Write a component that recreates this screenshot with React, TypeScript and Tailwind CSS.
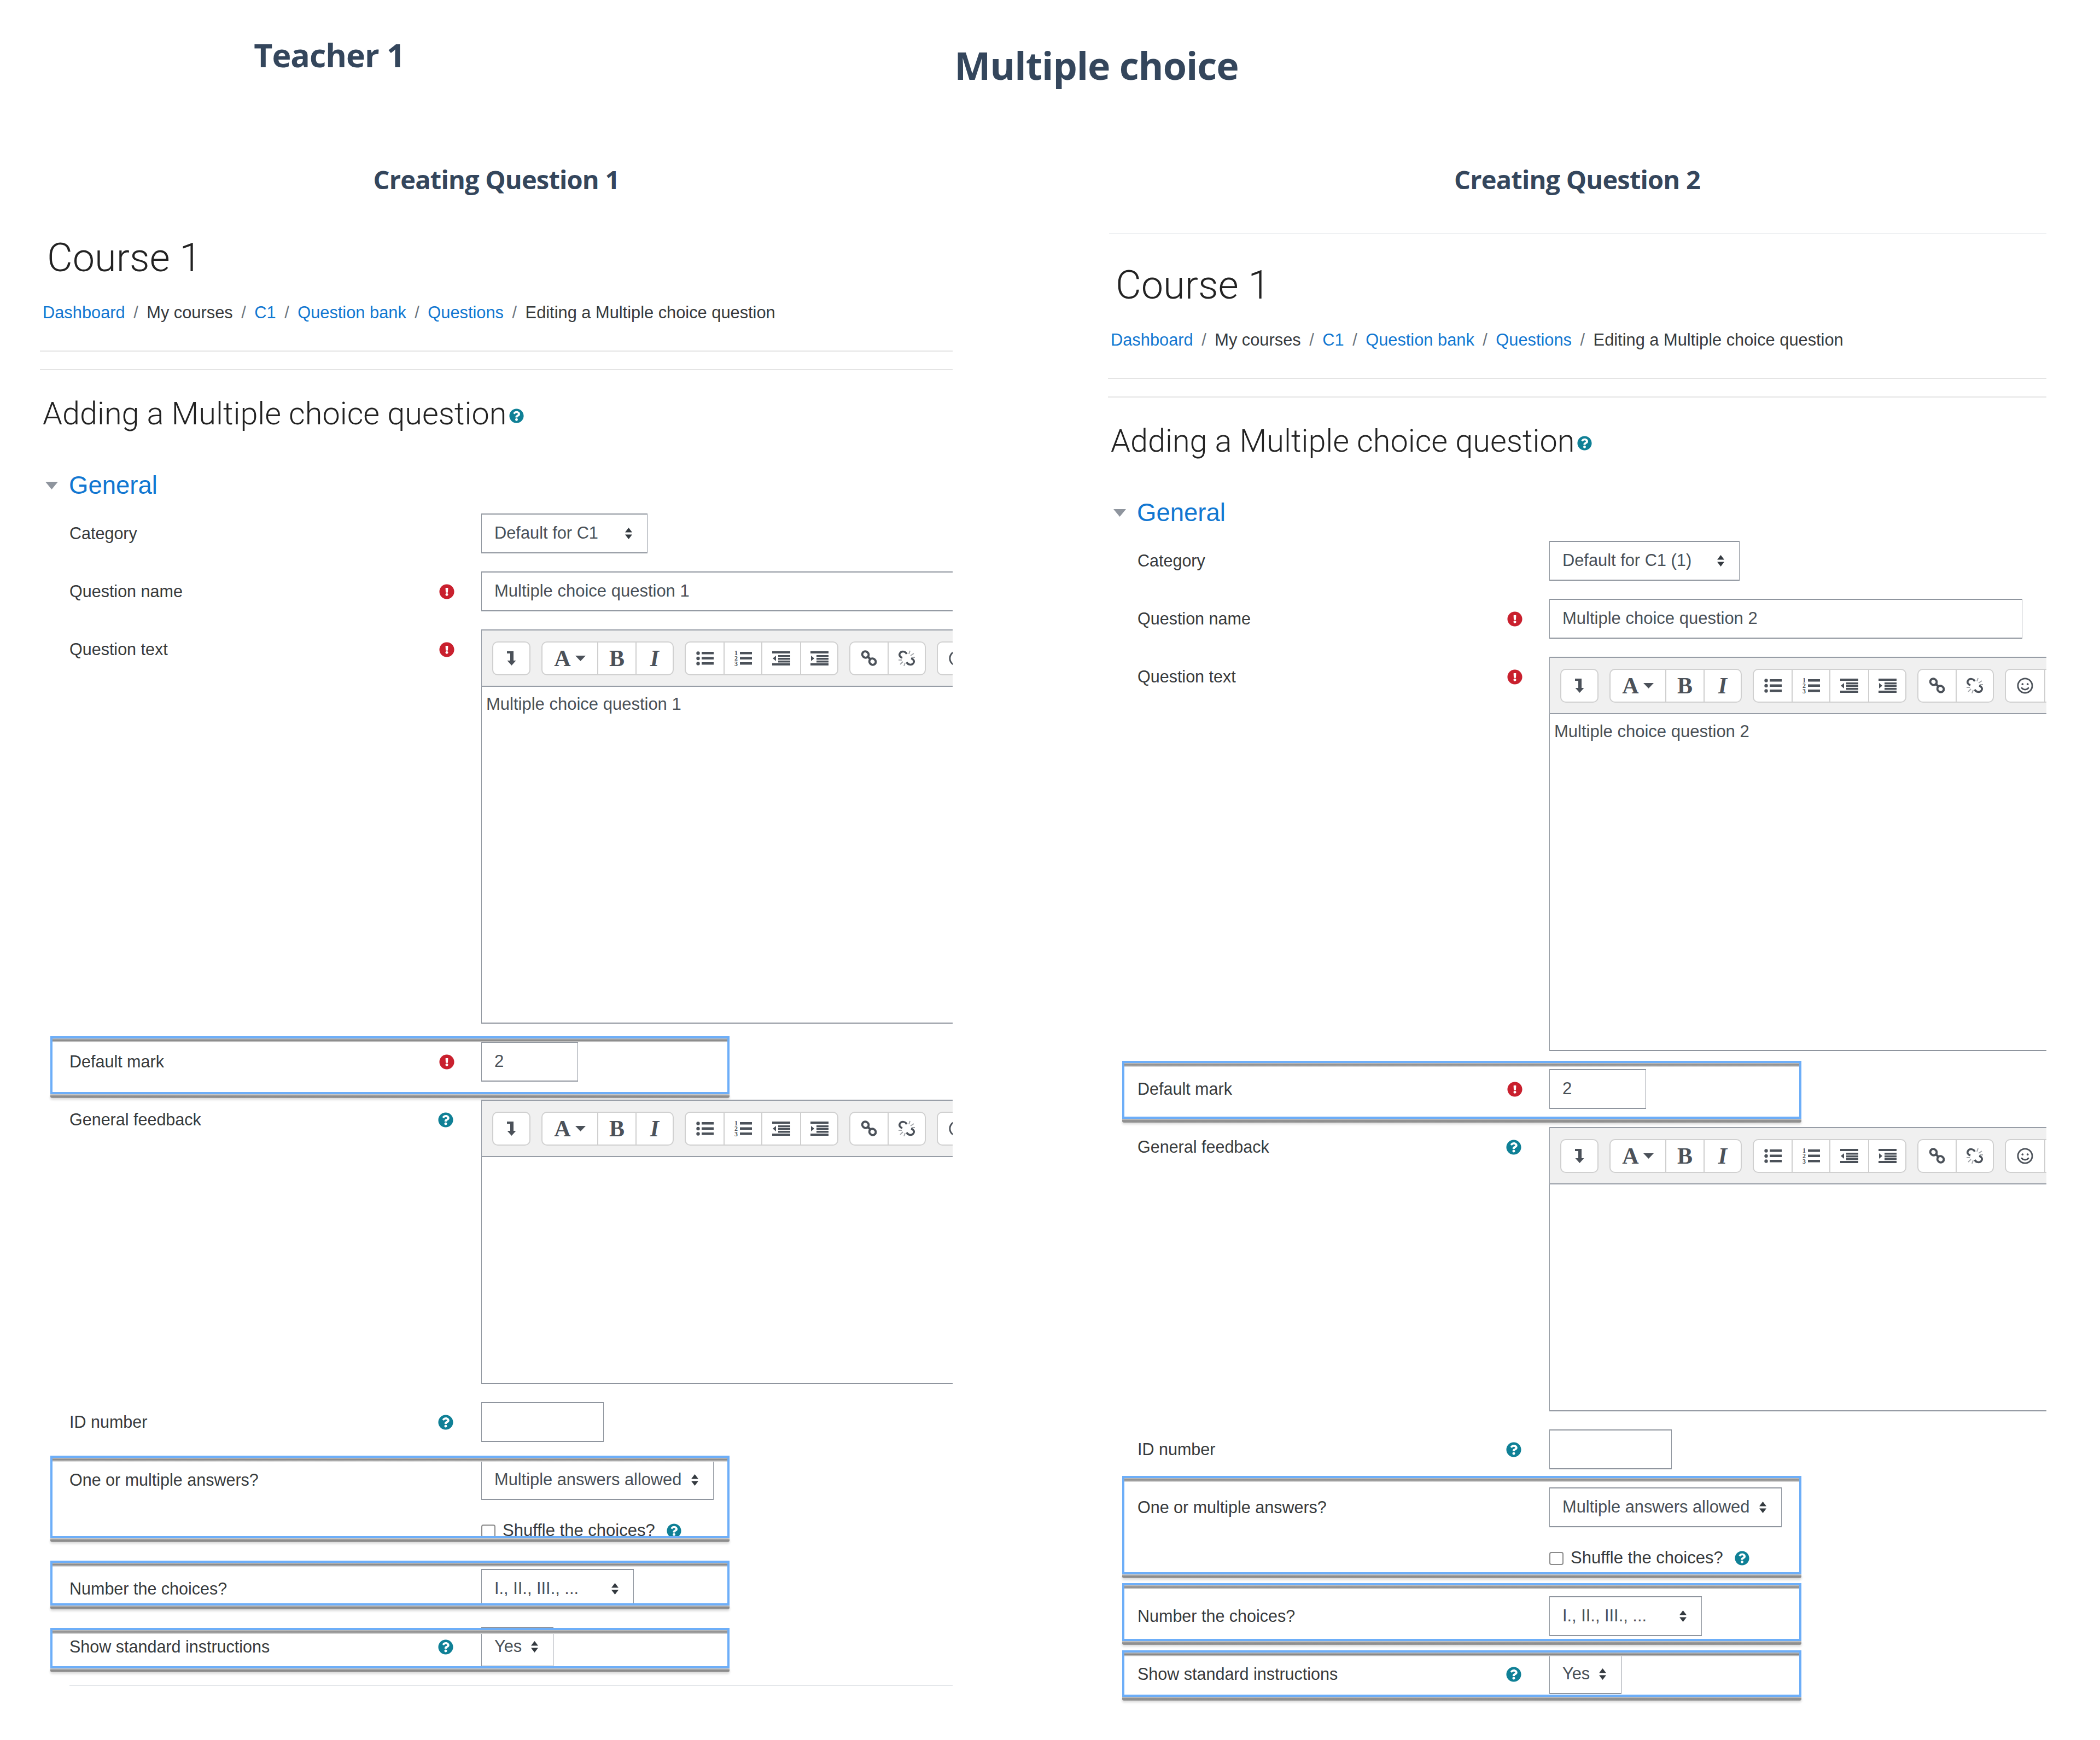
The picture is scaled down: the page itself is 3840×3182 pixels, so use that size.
import React from "react";
import { FaExclamationCircle, FaQuestionCircle, FaRegSmile } from "react-icons/fa";

const ICON = "#4b5159";

function Cell({ w, children, first }: { w: string; children?: React.ReactNode; first?: boolean }) {
  return (
    <div className={`${w} ${first ? "" : "border-l-2 border-[#cfcfcf]"} h-full flex items-center justify-center shrink-0`}>
      {children}
    </div>
  );
}

function Group({ children }: { children: React.ReactNode }) {
  return (
    <div className="flex h-[62px] shrink-0 rounded-[10px] border-2 border-[#d0d0d0] bg-white overflow-hidden">
      {children}
    </div>
  );
}

function Toolbar() {
  return (
    <div className="flex gap-[20px] w-[1100px] h-[105px] items-center pl-[19px] bg-[#f0f0f0] border-y-2 border-l border-[#979da6]">
      <Group>
        <Cell w="w-[66px]" first>
          <svg width="17" height="26" viewBox="0 0 17 26" fill={ICON}>
            <path d="M0 0h12v17h4.5L8.5 26 .5 17H6V4H0z" />
          </svg>
        </Cell>
      </Group>
      <Group>
        <Cell w="w-[100px]" first>
          <span className="font-['Liberation_Serif'] font-bold text-[42px] leading-none text-[#4b5159]">A</span>
          <svg className="ml-[8px]" width="19" height="10" viewBox="0 0 19 10" fill={ICON}>
            <path d="M0 0h19L9.5 10z" />
          </svg>
        </Cell>
        <Cell w="w-[70px]">
          <span className="font-['Liberation_Serif'] font-bold text-[42px] leading-none text-[#4b5159]">B</span>
        </Cell>
        <Cell w="w-[68px]">
          <span className="font-['Liberation_Serif'] font-bold italic text-[42px] leading-none text-[#4b5159]">I</span>
        </Cell>
      </Group>
      <Group>
        <Cell w="w-[69px]" first>
          <svg width="32" height="26" viewBox="0 0 32 26" fill={ICON}>
            <circle cx="3.5" cy="3.5" r="3.2" />
            <circle cx="3.5" cy="13" r="3.2" />
            <circle cx="3.5" cy="22.5" r="3.2" />
            <rect x="10" y="1" width="22" height="4.5" />
            <rect x="10" y="10.5" width="22" height="4.5" />
            <rect x="10" y="20" width="22" height="4.5" />
          </svg>
        </Cell>
        <Cell w="w-[69px]">
          <svg width="32" height="32" viewBox="0 0 32 32" fill={ICON}>
            <text x="0" y="10" fontSize="12" fontFamily="Liberation Serif" fontWeight="700">1</text>
            <text x="0" y="20" fontSize="12" fontFamily="Liberation Serif" fontWeight="700">2</text>
            <text x="0" y="30" fontSize="12" fontFamily="Liberation Serif" fontWeight="700">3</text>
            <rect x="10" y="4" width="22" height="4.5" />
            <rect x="10" y="13.5" width="22" height="4.5" />
            <rect x="10" y="23" width="22" height="4.5" />
          </svg>
        </Cell>
        <Cell w="w-[71px]">
          <svg width="33" height="26" viewBox="0 0 33 26" fill={ICON}>
            <rect x="0" y="0" width="33" height="4" />
            <rect x="11" y="7" width="22" height="3.5" />
            <rect x="11" y="12" width="22" height="3.5" />
            <rect x="11" y="17" width="22" height="3.5" />
            <rect x="0" y="22" width="33" height="4" />
            <path d="M7 8v10l-6-5z" />
          </svg>
        </Cell>
        <Cell w="w-[68px]">
          <svg width="33" height="26" viewBox="0 0 33 26" fill={ICON}>
            <rect x="0" y="0" width="33" height="4" />
            <rect x="11" y="7" width="22" height="3.5" />
            <rect x="11" y="12" width="22" height="3.5" />
            <rect x="11" y="17" width="22" height="3.5" />
            <rect x="0" y="22" width="33" height="4" />
            <path d="M1 8v10l6-5z" />
          </svg>
        </Cell>
      </Group>
      <Group>
        <Cell w="w-[68px]" first>
          <svg width="30" height="29" viewBox="0 0 30 29" fill="none" stroke={ICON} strokeWidth="4">
            <ellipse cx="8.5" cy="8" rx="6" ry="5.5" transform="rotate(40 8.5 8)" />
            <ellipse cx="21.5" cy="21" rx="6" ry="5.5" transform="rotate(40 21.5 21)" />
            <path d="M12 11l6 6" />
          </svg>
        </Cell>
        <Cell w="w-[68px]">
          <svg width="30" height="29" viewBox="0 0 30 29" fill="none">
            <path d="M15 7C13 2 6 1 3 5c-3 4 0 8 4 9M15 22c2 5 9 6 12 2 3-4 0-8-4-9" stroke={ICON} strokeWidth="3.5" />
            <path d="M19 7l2-6M22 10l6-4M24 13h6M6 18H0M8 21l-5 5M12 23l-2 6" stroke="#a4a7ab" strokeWidth="2" />
          </svg>
        </Cell>
      </Group>
      <Group>
        <Cell w="w-[70px]" first>
          <FaRegSmile size={30} color={ICON} />
        </Cell>
        <Cell w="w-[70px]" />
      </Group>
    </div>
  );
}

function Arrows() {
  return (
    <svg width="17" height="21" viewBox="0 0 17 21" fill="#343a40" className="shrink-0">
      <path d="M8.5 0L15 8.5H2zM8.5 21L2 12.5h13z" />
    </svg>
  );
}

function Select({ label, w }: { label: string; w: string }) {
  return (
    <div className={`${w} h-[73px] flex items-center justify-between pl-[23px] pr-[25px] bg-white border-y-2 border-x border-[#8f959e] text-[#495057] text-[30.8px]`}>
      <span>{label}</span>
      <Arrows />
    </div>
  );
}

function TextInput({ value, w }: { value: string; w: string }) {
  return (
    <div className={`${w} h-[73px] flex items-center pl-[23px] bg-white border-y-2 border-x border-[#8f959e] text-[#495057] text-[31px]`}>
      {value}
    </div>
  );
}

function Editor({ text, h }: { text?: string; h: string }) {
  return (
    <div className="w-[1100px] shrink-0">
      <Toolbar />
      <div className={`${h} pl-[8px] pt-[12px] border-l border-b-2 border-[#8f959e] text-[#495057] text-[31px] leading-[40px]`}>
        {text}
      </div>
    </div>
  );
}

type Mark = "err" | "help" | "none";

function Row({
  label,
  mark = "none",
  children,
  overlay,
}: {
  label: string;
  mark?: Mark;
  children: React.ReactNode;
  overlay?: string;
}) {
  return (
    <div className="relative flex pl-[54px]">
      <div className="w-[753px] h-[73px] shrink-0 flex items-center justify-between pt-[1px] pr-[49px] text-[#373a3c]">
        <span>{label}</span>
        {mark === "err" && <FaExclamationCircle size={28} color="#c9202e" />}
        {mark === "help" && <FaQuestionCircle size={28} color="#0f8096" className="mr-[2px]" />}
      </div>
      <div className="flex flex-col">{children}</div>
      {overlay && (
        <div className={`absolute border-[4px] border-[#6daef8] pointer-events-none w-[1242px] ${overlay}`}>
          <div className="absolute left-0 right-0 top-0 h-[7px] bg-gradient-to-b from-[#c4c4c4] via-[#858585] to-[#e6e6e6]" />
          <div className="absolute -left-[4px] -right-[4px] -bottom-[11px] h-[7px] rounded-b-[3px] bg-gradient-to-b from-[#d0d0d0] via-[#8a8a8a] to-[#9a9a9a] shadow-[0_3px_4px_rgba(0,0,0,0.15)]" />
        </div>
      )}
    </div>
  );
}

function Panel({
  n,
  category,
  catW,
  right,
  boxes,
}: {
  n: number;
  category: string;
  catW: string;
  right?: boolean;
  boxes: [string, string, string, string];
}) {
  const Sep = () => <span className="text-[#6c757d] mx-[15.5px]">/</span>;
  return (
    <div className={right ? "w-[1716px] ml-[284px] pb-[60px] overflow-hidden text-[30.5px]" : "w-[1669px] pb-[60px] overflow-hidden text-[30.5px]"}>
      <div className="h-[136px] flex items-center justify-center font-['Open_Sans',sans-serif] font-bold text-[47px] tracking-[-0.8px] text-[#34465c]">
        Creating Question {n}
      </div>
      <div className={right ? "mt-[30px] pt-[49px] border-t border-[#dee2e6] ml-[2px]" : "mt-[30px]"}>
        <div className={`h-[92px] flex items-center font-['Roboto',sans-serif] font-light text-[72px] text-[#222] ${right ? "pl-[12px]" : "pl-[13px]"}`}>
          Course 1
        </div>
      </div>
      <div className="mt-[34px] h-[40px] flex items-center pl-[5px] whitespace-nowrap text-[#373a3c] text-[30.8px]">
        <a className="text-[#1177d1]">Dashboard</a>
        <Sep />
        <span>My courses</span>
        <Sep />
        <a className="text-[#1177d1]">C1</a>
        <Sep />
        <a className="text-[#1177d1]">Question bank</a>
        <Sep />
        <a className="text-[#1177d1]">Questions</a>
        <Sep />
        <span>Editing a Multiple choice question</span>
      </div>
      <div className="mt-[49px] h-[2px] bg-[#e4e4e4]" />
      <div className="mt-[32px] h-[2px] bg-[#e4e4e4]" />
      <div className="mt-[43px] h-[74px] flex items-center pl-[5px] font-['Roboto',sans-serif] font-light text-[57.6px] text-[#222] whitespace-nowrap">
        <span>Adding a Multiple choice question</span>
        <FaQuestionCircle size={27} color="#0f8096" className="ml-[5px] mt-[6px]" />
      </div>
      <div className="mt-[64px] h-[60px] flex items-center pl-[10px]">
        <svg width="23" height="14" viewBox="0 0 23 14" fill="#8f959e">
          <path d="M0 0h23L11.5 14z" />
        </svg>
        <span className="ml-[20px] text-[45.5px] text-[#1177d1]">General</span>
      </div>
      <div className="mt-[21px] flex flex-col gap-[33px]">
        <Row label="Category">
          <Select label={category} w={catW} />
        </Row>
        <Row label="Question name" mark="err">
          <TextInput value={`Multiple choice question ${n}`} w="w-[865px]" />
        </Row>
        <Row label="Question text" mark="err">
          <Editor text={`Multiple choice question ${n}`} h="h-[616px]" />
        </Row>
        <Row label="Default mark" mark="err" overlay={boxes[0]}>
          <TextInput value="2" w="w-[177px]" />
        </Row>
        <Row label="General feedback" mark="help">
          <Editor h="h-[415px]" />
        </Row>
        <Row label="ID number" mark="help">
          <TextInput value="" w="w-[224px]" />
        </Row>
        <Row label="One or multiple answers?" overlay={boxes[1]}>
          <Select label="Multiple answers allowed" w="w-[425px]" />
          <div className="h-[93px] flex items-center pt-[20px]">
            <span className="w-[26px] h-[24px] rounded-[4px] border-2 border-[#8a8a8a] bg-white" />
            <span className="ml-[13px] text-[#373a3c] text-[31px]">Shuffle the choices?</span>
            <FaQuestionCircle size={27} color="#0f8096" className="ml-[21px]" />
          </div>
        </Row>
        <Row label="Number the choices?" overlay={boxes[2]}>
          <Select label="I., II., III., ..." w="w-[279px]" />
        </Row>
        <Row label="Show standard instructions" mark="help" overlay={boxes[3]}>
          <Select label="Yes" w="w-[132px]" />
        </Row>
      </div>
      {!right && <div className="mt-[33px] ml-[54px] h-[2px] bg-[#e4e7ea]" />}
    </div>
  );
}

export default function App() {
  return (
    <div className="w-[3840px] h-[3182px] bg-white overflow-hidden font-['Liberation_Sans',sans-serif]">
      <header className="flex h-[260px] font-['Open_Sans',sans-serif] font-bold text-[#34465c]">
        <div className="w-[1204px] mt-[60px] h-[80px] flex items-center justify-center text-[59px] tracking-[-1px]">Teacher 1</div>
        <div className="w-[1602px] mt-[79px] h-[80px] flex items-center justify-center text-[70px] tracking-[-1px]">Multiple choice</div>
      </header>
      <div className="flex pl-[73px]">
        <Panel
          n={1}
          category="Default for C1"
          catW="w-[304px]"
          boxes={[
            "left-[19px] top-[-10px] h-[106px]",
            "left-[19px] top-[-8px] h-[151px]",
            "left-[19px] top-[-15px] h-[82px]",
            "left-[19px] top-[2px] h-[74px]",
          ]}
        />
        <Panel
          right
          n={2}
          category="Default for C1 (1)"
          catW="w-[348px]"
          boxes={[
            "left-[26px] top-[-15px] h-[106px]",
            "left-[26px] top-[-21px] h-[180px]",
            "left-[26px] top-[-24px] h-[106px]",
            "left-[26px] top-[-7px] h-[85px]",
          ]}
        />
      </div>
    </div>
  );
}
